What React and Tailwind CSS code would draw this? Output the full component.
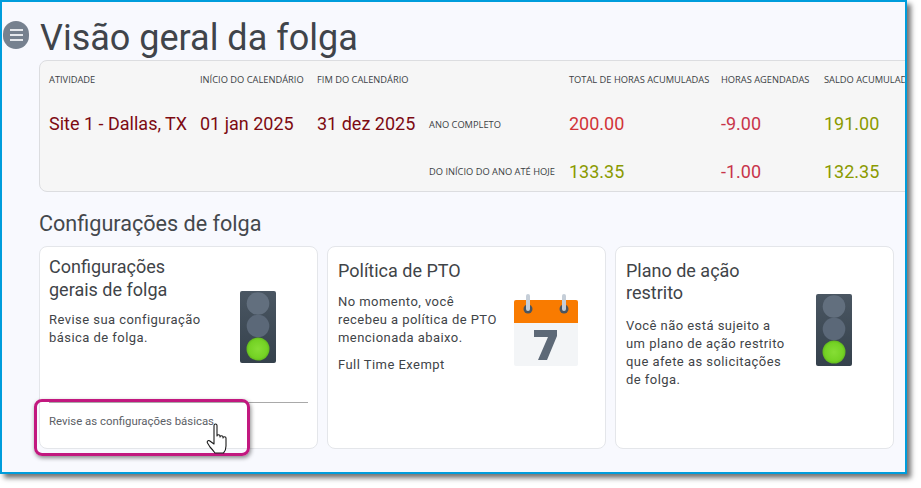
import React from 'react';

function TrafficLight() {
  return (
    <svg width="36" height="72" viewBox="0 0 36 72" className="shrink-0">
      <defs>
        <linearGradient id="tlBody" x1="0" y1="0" x2="0" y2="1">
          <stop offset="0" stopColor="#4a5662" />
          <stop offset="1" stopColor="#35414c" />
        </linearGradient>
        <radialGradient id="tlGreen" cx="0.5" cy="0.5" r="0.5">
          <stop offset="0" stopColor="#86de35" />
          <stop offset="0.8" stopColor="#74d224" />
          <stop offset="1" stopColor="#62b81e" />
        </radialGradient>
      </defs>
      <rect width="36" height="72" rx="2" fill="url(#tlBody)" />
      <circle cx="18" cy="12.5" r="11.3" fill="#626f7e" />
      <circle cx="18" cy="35" r="11.3" fill="#5b6878" />
      <circle cx="18" cy="58" r="11.5" fill="url(#tlGreen)" />
    </svg>
  );
}

function CalendarIcon() {
  return (
    <svg width="64" height="73" viewBox="0 0 64 73" className="shrink-0">
      <rect x="0" y="6" width="64" height="66" rx="2" fill="#f3f5f7" />
      <path d="M0 29V8a2 2 0 0 1 2-2h60a2 2 0 0 1 2 2v21z" fill="#f97b00" />
      <circle cx="14" cy="15" r="4.500" fill="#4a5560" />
      <circle cx="50" cy="15" r="4.500" fill="#4a5560" />
      <rect x="12" y="0" width="4" height="17" rx="2" fill="#c5ced8" />
      <rect x="48" y="0" width="4" height="17" rx="2" fill="#c5ced8" />
      <path d="M20 36h23v6L33 66h-9l10-23H20z" fill="#5d6977" />
    </svg>
  );
}

function HandCursor() {
  return (
    <svg width="26" height="32" viewBox="0 0 26 32" className="absolute left-[206px] top-[423px]">
      <path
        d="M8 2.500c0-2 3-2 3 0V13c0-1.600 3-1.600 3 0v1c0-1.600 3-1.600 3 0v1c0-1.600 3-1.600 3 0v8c0 3-1.500 6-2.500 7H9c-1.500-2-3-4-5-6L1.500 20c-1-1.500.5-3 2-2.200L8 21z"
        fill="#fff"
        stroke="#1a1a1a"
        strokeWidth="1.100"
        strokeLinejoin="round"
      />
    </svg>
  );
}

const labelClass = 'text-[9.3px] text-[#3b3f44] font-["Open_Sans",sans-serif] whitespace-nowrap';
const bigClass = 'text-[18px] font-["Roboto",sans-serif] whitespace-nowrap';
const bodyClass = 'text-[13px] leading-[18px] tracking-[0.45px]';

export default function App() {
  return (
    <div className="w-[921px] h-[488px] bg-white relative overflow-hidden">
      <div className="w-[907px] h-[474px] border-2 border-[#009ddc] bg-[#f8f9fe] overflow-hidden shadow-[4px_4px_5px_rgba(0,0,0,0.55)] font-['Roboto',sans-serif] pl-[37px] pr-[11px]">
        <div className="h-[58px] flex items-center relative">
          <div className="absolute left-[-36px] top-[19px] w-[26px] h-[28px] rounded-full bg-[#76818f] flex flex-col items-center justify-center gap-[3px]">
            <span className="block w-[13px] h-[2px] bg-[#e6e9ed]" />
            <span className="block w-[13px] h-[2px] bg-[#e6e9ed]" />
            <span className="block w-[13px] h-[2px] bg-[#e6e9ed]" />
          </div>
          <h1 className="text-[36px] text-[#40444a] font-normal leading-none mt-[13px] ml-[1px] whitespace-nowrap">Visão geral da folga</h1>
        </div>

        <div className="w-[900px] h-[132px] border border-[#dcdde0] rounded-[8px] bg-[#f6f6f6] pl-[9px] grid grid-cols-[151px_117px_111px_141px_152px_103px_100px] grid-rows-[38px_49px_47px] items-center">
          <div className={labelClass}>ATIVIDADE</div>
          <div className={labelClass}>INÍCIO DO CALENDÁRIO</div>
          <div className={labelClass}>FIM DO CALENDÁRIO</div>
          <div />
          <div className={labelClass}>TOTAL DE HORAS ACUMULADAS</div>
          <div className={labelClass}>HORAS AGENDADAS</div>
          <div className={labelClass}>SALDO ACUMULADO</div>

          <div className={`${bigClass} text-[#7d0a12]`}>Site 1 - Dallas, TX</div>
          <div className={`${bigClass} text-[#7d0a12]`}>01 jan 2025</div>
          <div className={`${bigClass} text-[#7d0a12]`}>31 dez 2025</div>
          <div className={`${labelClass} mt-[2px] ml-[1px]`}>ANO COMPLETO</div>
          <div className={`${bigClass} text-[#d13438]`}>200.00</div>
          <div className={`${bigClass} text-[#c8344a]`}>-9.00</div>
          <div className={`${bigClass} text-[#8a9a00]`}>191.00</div>

          <div />
          <div />
          <div />
          <div className={`${labelClass} ml-[1px]`}>DO INÍCIO DO ANO ATÉ HOJE</div>
          <div className={`${bigClass} text-[#8a9a00]`}>133.35</div>
          <div className={`${bigClass} text-[#c8344a]`}>-1.00</div>
          <div className={`${bigClass} text-[#8a9a00]`}>132.35</div>
        </div>

        <h2 className="text-[21.6px] text-[#44484d] font-normal leading-[22px] mt-[21px] mb-[11px]">Configurações de folga</h2>

        <div className="flex gap-[9px]">
          <div className="w-[279px] h-[203px] bg-white border border-[#e4e6ea] rounded-[8px] flex flex-col px-[9px] text-[#3f4448]">
            <div className="flex justify-between h-[155px]">
              <div className="w-[165px] pt-[8px]">
                <h3 className="text-[18px] leading-[23px] font-normal">Configurações gerais de folga</h3>
                <p className={`${bodyClass} mt-[10px]`}>Revise sua configuração básica de folga.</p>
              </div>
              <div className="pt-[44px] pr-[32px]"><TrafficLight /></div>
            </div>
            <div className="border-t border-[#a9a9a9] pt-[10px] text-[11.4px] leading-[16px] text-[#5c6066]">Revise as configurações básicas.</div>
          </div>

          <div className="w-[279px] h-[203px] bg-white border border-[#e4e6ea] rounded-[8px] flex justify-between px-[10px] text-[#3f4448]">
            <div className="w-[166px] pt-[13px]">
              <h3 className="text-[18px] leading-[22px] font-normal">Política de PTO</h3>
              <p className={`${bodyClass} mt-[11px]`}>No momento, você recebeu a política de PTO mencionada abaixo.</p>
              <p className={`${bodyClass} mt-[9px]`}>Full Time Exempt</p>
            </div>
            <div className="pt-[47px] pr-[17px]"><CalendarIcon /></div>
          </div>

          <div className="w-[279px] h-[203px] bg-white border border-[#e4e6ea] rounded-[8px] flex justify-between px-[10px] text-[#3f4448]">
            <div className="w-[166px] pt-[13px]">
              <h3 className="text-[18px] leading-[22px] font-normal">Plano de ação restrito</h3>
              <p className={`${bodyClass} mt-[13px]`}>Você não está sujeito a um plano de ação restrito que afete as solicitações de folga.</p>
            </div>
            <div className="pt-[47px] pr-[31px]"><TrafficLight /></div>
          </div>
        </div>
      </div>

      <div className="absolute left-[34px] top-[399px] w-[216px] h-[57px] border-[3px] border-[#c2187f] rounded-[8px] shadow-[1px_2px_4px_rgba(0,0,0,0.45)]" />
      <HandCursor />
    </div>
  );
}
